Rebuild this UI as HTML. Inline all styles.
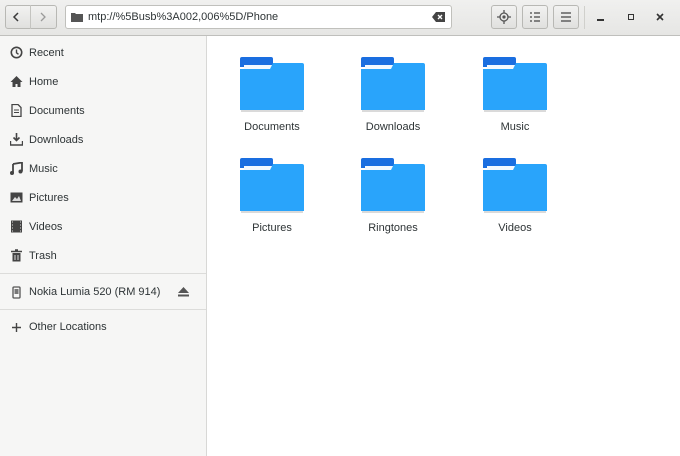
<!DOCTYPE html>
<html><head><style>
body{margin:0;width:680px;height:456px;overflow:hidden;font-family:"Liberation Sans",sans-serif;font-size:11px;color:#2e3436;background:#fff;position:relative}
.hdr{position:absolute;left:0;top:0;width:680px;height:35px;background:linear-gradient(#f0f0ef,#e6e6e4);border-bottom:1px solid #bfbfbc}
.btn{position:absolute;top:5px;height:24px;border:1px solid #b8b8b4;border-radius:3px;background:linear-gradient(#f2f2f1,#e0e0de);box-sizing:border-box}
.side{position:absolute;left:0;top:36px;width:206px;height:420px;background:#f6f6f5;border-right:1px solid #d8d8d6}
.it{position:absolute;left:29px;font-size:11px}
.ic{position:absolute;left:10px}
.sep{position:absolute;left:0;width:206px;height:1px;background:#dcdcda}
.f{position:absolute;width:64px;height:56px}
.lbl{position:absolute;width:110px;text-align:center;font-size:11px}
</style></head><body>
<div class="hdr">
 <div class="btn" style="left:5px;width:52px"></div>
 <div style="position:absolute;left:30px;top:5px;width:1px;height:24px;background:#c4c4c0"></div>
 <svg style="position:absolute;left:12px;top:11px" width="10" height="12"><path d="M6 2L2 6L6 10" stroke="#3a3a3a" stroke-width="1.5" fill="none"/></svg>
 <svg style="position:absolute;left:38px;top:11px" width="10" height="12"><path d="M3 2L7 6L3 10" stroke="#9a9a9a" stroke-width="1.3" fill="none"/></svg>
 <div style="position:absolute;left:65px;top:5px;width:387px;height:24px;border:1px solid #c0c0bc;border-radius:3px;background:#fff;box-sizing:border-box"></div>
 <svg style="position:absolute;left:71px;top:12px" width="12" height="10"><path d="M0 1h4l1 1h7v8H0z" fill="#555"/></svg>
 <div style="position:absolute;left:88px;top:11px;font-size:11px;color:#2e3436">mtp://%5Busb%3A002,006%5D/Phone</div>
 <svg style="position:absolute;left:432px;top:12px" width="13" height="10"><path d="M0 5L4 0h9v10H4z" fill="#444"/><path d="M6 3l4 4M10 3l-4 4" stroke="#fff" stroke-width="1.3"/></svg>
 <div class="btn" style="left:491px;width:26px"></div>
 <svg style="position:absolute;left:497px;top:10px" width="14" height="14"><circle cx="7" cy="7" r="4" fill="none" stroke="#555" stroke-width="1.3"/><circle cx="7" cy="7" r="1.6" fill="#555"/><path d="M7 0v3M7 11v3M0 7h3M11 7h3" stroke="#555" stroke-width="1.3"/></svg>
 <div class="btn" style="left:522px;width:26px"></div>
 <svg style="position:absolute;left:530px;top:12px" width="10" height="10"><path d="M0 1h2M0 5h2M0 9h2M4 1h6M4 5h6M4 9h6" stroke="#444" stroke-width="1.2"/></svg>
 <div class="btn" style="left:553px;width:26px"></div>
 <svg style="position:absolute;left:561px;top:12px" width="10" height="10"><path d="M0 1h10M0 5h10M0 9h10" stroke="#444" stroke-width="1.3"/></svg>
 <div style="position:absolute;left:584px;top:6px;width:1px;height:23px;background:#d0d0cc"></div>
 <div style="position:absolute;left:597px;top:19px;width:7px;height:2px;background:#333"></div>
 <div style="position:absolute;left:628px;top:14px;width:4px;height:4px;border:1.5px solid #333"></div>
 <svg style="position:absolute;left:656px;top:13px" width="8" height="8"><path d="M1 1l6 6M7 1l-6 6" stroke="#333" stroke-width="1.6"/></svg>
</div>
<div class="side">
 <svg class="ic" style="top:10px" width="13" height="13"><circle cx="6.5" cy="6.5" r="5.2" fill="none" stroke="#444" stroke-width="1.6"/><path d="M6.5 3.5v3.3l2 1.5" stroke="#444" stroke-width="1.4" fill="none"/></svg>
 <div class="it" style="top:11px">Recent</div>
 <svg class="ic" style="top:39px" width="13" height="13"><path d="M6.5 1L0.5 7h2v5h3V9h2v3h3V7h2z" fill="#444"/></svg>
 <div class="it" style="top:40px">Home</div>
 <svg class="ic" style="top:68px" width="13" height="13"><path d="M2 .5h6l3 3v9H2z" fill="none" stroke="#444" stroke-width="1.3"/><path d="M4 6h5M4 8.5h5" stroke="#444"/></svg>
 <div class="it" style="top:69px">Documents</div>
 <svg class="ic" style="top:97px" width="13" height="13"><path d="M6.5 0v7M3.5 4.5l3 3 3-3" stroke="#444" stroke-width="1.6" fill="none"/><path d="M.5 8v4h12V8" stroke="#444" stroke-width="1.4" fill="none"/></svg>
 <div class="it" style="top:98px">Downloads</div>
 <svg class="ic" style="top:126px" width="13" height="13"><path d="M3 2l9-1.5v9" stroke="#444" stroke-width="1.8" fill="none"/><path d="M3 2v9" stroke="#444" stroke-width="1.8"/><circle cx="2" cy="11" r="2" fill="#444"/><circle cx="10.5" cy="9.5" r="2" fill="#444"/></svg>
 <div class="it" style="top:127px">Music</div>
 <svg class="ic" style="top:155px" width="13" height="13"><rect x=".5" y="1.5" width="12" height="10" fill="#444"/><path d="M2 10l3-4 2 2 2-3 2 5z" fill="#ddd"/></svg>
 <div class="it" style="top:156px">Pictures</div>
 <svg class="ic" style="top:184px" width="13" height="13"><rect x="1" y=".5" width="11" height="12" fill="#444"/><path d="M2 2h1M2 5h1M2 8h1M2 11h1M10 2h1M10 5h1M10 8h1M10 11h1" stroke="#ddd"/></svg>
 <div class="it" style="top:185px">Videos</div>
 <svg class="ic" style="top:213px" width="13" height="13"><path d="M1 2.5h11M5 1h3" stroke="#444" stroke-width="1.5"/><path d="M2.5 4h8v8.5h-8z" fill="#444"/><path d="M5 6v5M8 6v5" stroke="#ddd"/></svg>
 <div class="it" style="top:214px">Trash</div>
 <div class="sep" style="top:237px"></div>
 <svg class="ic" style="top:250px" width="13" height="13"><rect x="3" y="1" width="7" height="11" rx="1" fill="none" stroke="#555" stroke-width="1.3"/><rect x="4.5" y="3" width="4" height="5" fill="#777"/></svg>
 <div class="it" style="top:250px">Nokia Lumia 520 (RM 914)</div>
 <svg style="position:absolute;left:178px;top:251px" width="11" height="10"><path d="M5.5 0L11 6H0z" fill="#555"/><rect x="0" y="7.5" width="11" height="2" fill="#555"/></svg>
 <div class="sep" style="top:273px"></div>
 <svg class="ic" style="top:285px" width="13" height="13"><path d="M6.5 2v9M2 6.5h9" stroke="#444" stroke-width="1.4"/></svg>
 <div class="it" style="top:285px">Other Locations</div>
</div>
<svg width="0" height="0" style="position:absolute"><defs><g id="fold"><path d="M0 2a2 2 0 0 1 2-2h29a2 2 0 0 1 2 2v8H0z" fill="#1a6ee0"/><rect x="4" y="8" width="28" height="4" fill="#f2f8ff"/><path d="M0 12h30l3-6h29a2 2 0 0 1 2 2v45H0z" fill="#29a4fb"/><rect x="1" y="53" width="62" height="2" fill="#dadada"/></g></defs></svg>
<svg class="f" style="left:240px;top:57px"><use href="#fold"/></svg>
<svg class="f" style="left:361px;top:57px"><use href="#fold"/></svg>
<svg class="f" style="left:483px;top:57px"><use href="#fold"/></svg>
<svg class="f" style="left:240px;top:158px"><use href="#fold"/></svg>
<svg class="f" style="left:361px;top:158px"><use href="#fold"/></svg>
<svg class="f" style="left:483px;top:158px"><use href="#fold"/></svg>
<div class="lbl" style="left:217px;top:121px">Documents</div>
<div class="lbl" style="left:338px;top:121px">Downloads</div>
<div class="lbl" style="left:460px;top:121px">Music</div>
<div class="lbl" style="left:217px;top:222px">Pictures</div>
<div class="lbl" style="left:338px;top:222px">Ringtones</div>
<div class="lbl" style="left:460px;top:222px">Videos</div>
</body></html>
